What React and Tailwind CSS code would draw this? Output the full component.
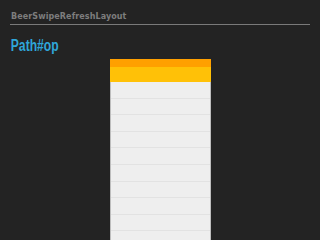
import React from "react";

export default function App() {
  const rows = Array.from({ length: 10 });
  return (
    <div className="w-[320px] h-[240px] overflow-hidden bg-[#232323] flex flex-col">
      <div className="px-[10px] pt-[12px]">
        <div
          className="text-[8px] leading-[10px] font-bold text-[#7d7d7d] pl-[1px] tracking-[0.1px]"
          style={{ fontFamily: '"DejaVu Sans", sans-serif' }}
        >
          BeerSwipeRefreshLayout
        </div>
        <div className="mt-[2px] h-[1px] bg-[#7a7a7a] w-[300px]" />
        <div
          className="mt-[13px] text-[16px] leading-[16px] font-bold text-[#2fa6d9] pl-[1px] origin-left scale-x-[0.76] whitespace-nowrap"
          style={{ fontFamily: '"Liberation Sans Narrow", "Liberation Sans", sans-serif' }}
        >
          Path#op
        </div>
      </div>
      <div className="flex justify-center mt-[5px]">
        <div className="w-[101px] flex flex-col">
          <div className="h-[8px] bg-[#ffa000]" />
          <div className="h-[15px] bg-[#ffc107]" />
          <div className="flex flex-col bg-[#eeeeee] border-l border-r border-[#bdbdbd]">
            {rows.map((_, i) => (
              <div key={i} className="h-[16.6px] border-b border-[#e2e2e2]" />
            ))}
          </div>
        </div>
      </div>
    </div>
  );
}
